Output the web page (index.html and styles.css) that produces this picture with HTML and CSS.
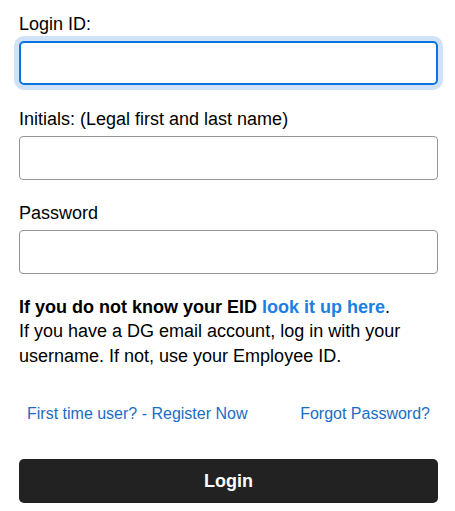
FILE: index.html
```html
<!DOCTYPE html>
<html lang="en">
<head>
<meta charset="utf-8">
<title>Login</title>
<link rel="stylesheet" href="styles.css">
</head>
<body>
<form class="login-form">
  <div class="field">
    <label class="field-label" for="loginId">Login ID:</label>
    <input class="field-input is-focused" id="loginId" type="text">
  </div>
  <div class="field">
    <label class="field-label" for="initials">Initials: (Legal first and last name)</label>
    <input class="field-input" id="initials" type="text">
  </div>
  <div class="field">
    <label class="field-label" for="password">Password</label>
    <input class="field-input" id="password" type="password">
  </div>
  <p class="help-text"><strong>If you do not know your EID <a class="help-link" href="#">look it up here</a></strong>.<br>If you have a DG email account, log in with your username. If not, use your Employee ID.</p>
  <div class="links-row">
    <a class="small-link" href="#">First time user? - Register Now</a>
    <a class="small-link" href="#">Forgot Password?</a>
  </div>
  <button class="login-button" type="button">Login</button>
</form>
</body>
</html>
```

FILE: styles.css
```css
* { box-sizing: border-box; }
html, body {
  margin: 0;
  padding: 0;
  background: #fff;
}
body {
  font-family: "Liberation Sans", Arial, sans-serif;
  color: #000;
}
.login-form {
  display: flex;
  flex-direction: column;
  padding: 13px 17px 0 19px;
}
.field {
  display: flex;
  flex-direction: column;
  margin-bottom: 22.5px;
}
.field-label {
  font-size: 18px;
  line-height: 22px;
  margin-bottom: 6px;
}
.field-input {
  display: block;
  width: 100%;
  height: 44px;
  border: 1px solid #959595;
  border-radius: 4px;
  background: #fff;
  font: inherit;
  font-size: 18px;
  padding: 0 12px;
  outline: none;
}
.field-input.is-focused {
  border: 2px solid #0b74de;
  box-shadow: 0 0 0 5px #cfe2f7;
  border-radius: 5px;
}
.help-text {
  margin: -2px 0 0;
  font-size: 18px;
  line-height: 24.5px;
}
.help-link {
  color: #1a80e3;
  text-decoration: none;
}
.links-row {
  display: flex;
  justify-content: space-between;
  padding: 0 8px;
  margin-top: 37px;
}
.small-link {
  font-size: 16px;
  line-height: 18px;
  color: #1a6dc4;
  text-decoration: none;
}
.login-button {
  margin-top: 36px;
  height: 44px;
  width: 100%;
  border: none;
  border-radius: 5px;
  background: #222;
  color: #fff;
  font-family: "Liberation Sans", Arial, sans-serif;
  font-weight: bold;
  font-size: 18px;
}
```
